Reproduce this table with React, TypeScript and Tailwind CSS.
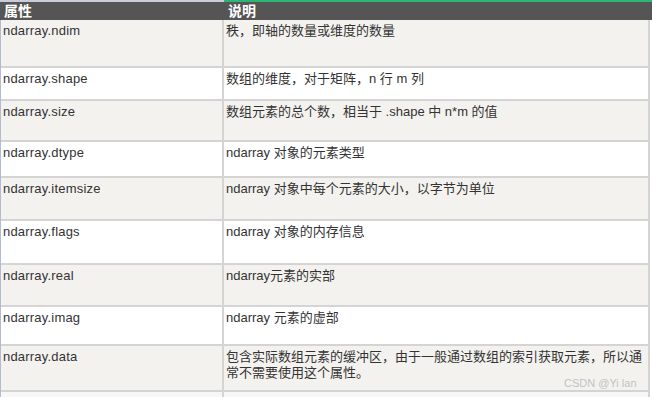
const rows = [
  { name: 'ndarray.ndim', desc: '秩，即轴的数量或维度的数量', h: 'h-[48px]', bg: 'bg-[#f3f2ef]' },
  { name: 'ndarray.shape', desc: '数组的维度，对于矩阵，n 行 m 列', h: 'h-[33px]', bg: 'bg-white' },
  { name: 'ndarray.size', desc: '数组元素的总个数，相当于 .shape 中 n*m 的值', h: 'h-[41px]', bg: 'bg-[#f3f2ef]' },
  { name: 'ndarray.dtype', desc: 'ndarray 对象的元素类型', h: 'h-[36px]', bg: 'bg-white' },
  { name: 'ndarray.itemsize', desc: 'ndarray 对象中每个元素的大小，以字节为单位', h: 'h-[43px]', bg: 'bg-[#f3f2ef]' },
  { name: 'ndarray.flags', desc: 'ndarray 对象的内存信息', h: 'h-[44px]', bg: 'bg-white' },
  { name: 'ndarray.real', desc: 'ndarray元素的实部', h: 'h-[42px]', bg: 'bg-[#f3f2ef]' },
  { name: 'ndarray.imag', desc: 'ndarray 元素的虚部', h: 'h-[39px]', bg: 'bg-white' },
  {
    name: 'ndarray.data',
    desc: '包含实际数组元素的缓冲区，由于一般通过数组的索引获取元素，所以通常不需要使用这个属性。',
    h: 'h-[46px]',
    bg: 'bg-[#f3f2ef]',
  },
  { name: '', desc: '', h: 'h-[20px]', bg: 'bg-[#f7f7f7]' },
]

export default function App() {
  return (
    <div
      className="relative w-[652px] h-[397px] overflow-hidden bg-white text-[13px] leading-[16px] text-[#333]"
      style={{ fontFamily: '"Liberation Sans", Arial, "Noto Sans CJK SC", sans-serif' }}
    >
      {/* top strip */}
      <div className="flex h-[2px]">
        <div className="w-[224px] bg-[#c9cdd9]" />
        <div className="flex-1 bg-[#2bb673]" />
      </div>

      {/* header */}
      <div className="flex h-[18px] bg-[#555555] text-white font-bold text-[14px] leading-[18px]">
        <div className="w-[224px] pl-[4px]">属性</div>
        <div className="flex-1 pl-[4px]">说明</div>
      </div>

      {/* body */}
      <div className="border-l border-[#b3bbd3] mr-[2px]">
        {rows.map((r, i) => (
          <div key={i} className={`flex border-b-2 border-[#d4d4d4] ${r.h} ${r.bg}`}>
            <div className="w-[223px] shrink-0 border-r-2 border-[#d4d4d4] pl-[2px] pt-[3px] tracking-[0.2px]">
              {r.name}
            </div>
            <div className="flex-1 border-r-2 border-[#d4d4d4] pl-[2px] pr-[4px] pt-[3px]">{r.desc}</div>
          </div>
        ))}
      </div>

      {/* watermark */}
      <div className="absolute left-[564px] top-[376px] text-[11px] leading-[14px] text-[#c2c2c2]">CSDN @Yi lan</div>
    </div>
  )
}
